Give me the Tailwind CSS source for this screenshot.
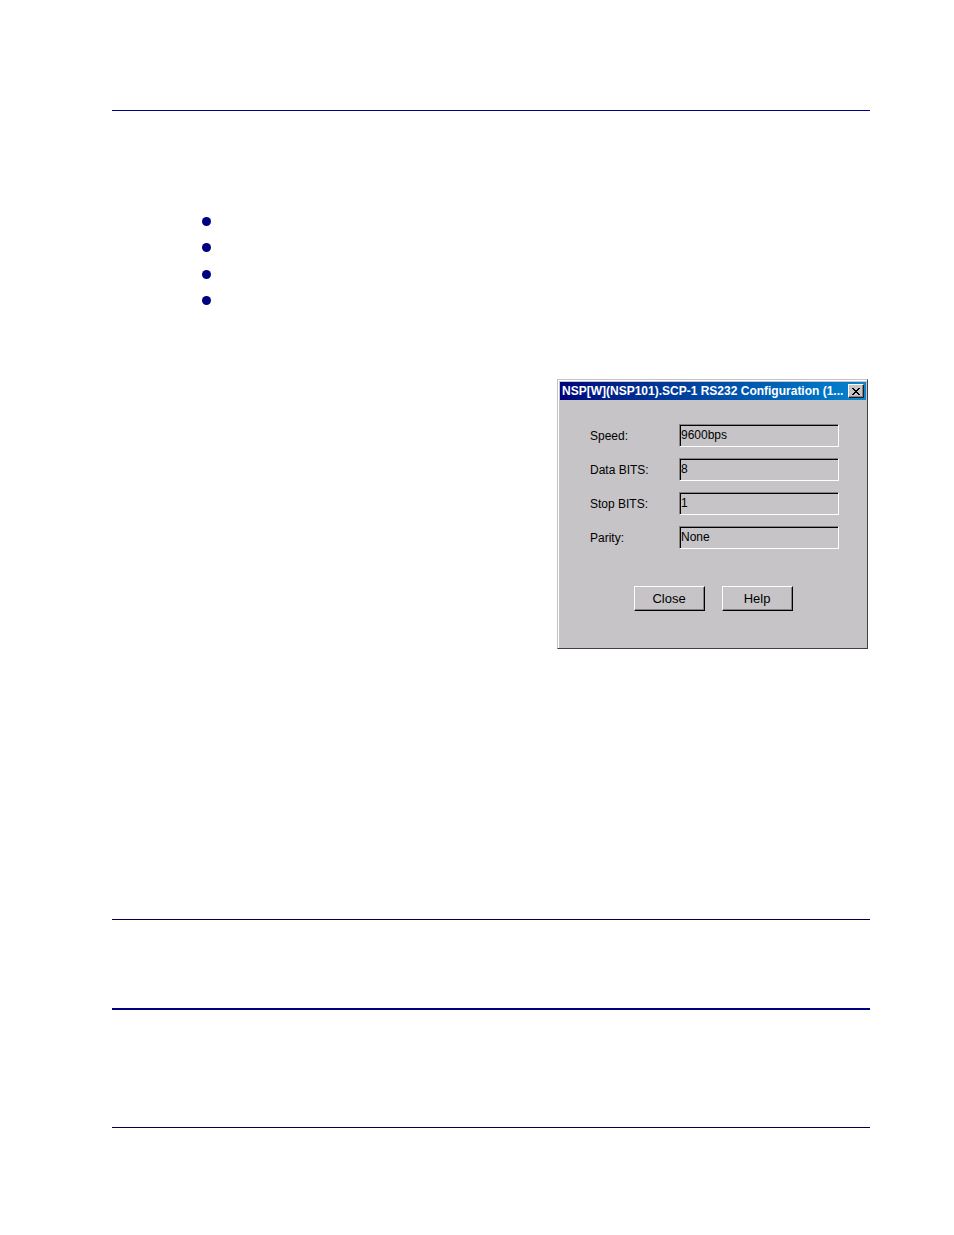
<!DOCTYPE html>
<html lang="en">

<head>
    <meta charset="UTF-8">
    <meta name="viewport" content="width=device-width, initial-scale=1.0">
    <title>RS232 Configuration</title>
    <script src="https://cdn.jsdelivr.net/npm/@tailwindcss/browser@4"></script>
</head>

<body class="bg-white text-black font-['Liberation_Sans',Arial,sans-serif]">
    <div class="pl-[112px] pr-[84px] pt-[110px] pb-[107px]">
        <header class="border-t border-[#000080]"></header>

        <main class="pt-[106px]">
            <ul class="ml-[90px] h-[88px] flex flex-col justify-between">
                <li class="size-[9px] rounded-full bg-[#000080]"></li>
                <li class="size-[9px] rounded-full bg-[#000080]"></li>
                <li class="size-[9px] rounded-full bg-[#000080]"></li>
                <li class="size-[9px] rounded-full bg-[#000080]"></li>
            </ul>

            <!-- RS232 dialog -->
            <section class="mt-[74px] mr-[2px] ml-auto w-[311px] border border-t-[#c6c3c6] border-l-[#c6c3c6] border-r-[#404040] border-b-[#404040]">
                <div class="border-t border-l border-white bg-[#c6c4c7] pt-px pl-px pr-px pb-[37px]">
                    <div class="h-[18px] flex items-center justify-between pl-[2px] pr-[2px] bg-linear-to-r from-[#00007c] to-[#1084d0]">
                        <h1 class="text-xs font-bold text-white whitespace-nowrap">NSP[W](NSP101).SCP-1 RS232 Configuration (1...</h1>
                        <button aria-label="Close window" class="w-[16px] h-[14px] shrink-0 flex items-center justify-center bg-[#c6c4c7] border border-t-white border-l-white border-r-[#202020] border-b-[#202020] shadow-[inset_-1px_-1px_0_#848284]">
                            <svg class="w-[8px] h-[7px]" viewBox="0 0 8 7" fill="#000" shape-rendering="crispEdges">
                                <path d="M0 0h2v1h1v1h2v-1h1v-1h2v1h-1v1h-1v1h-1v1h1v1h1v1h1v1h-2v-1h-1v-1h-2v1h-1v1h-2v-1h1v-1h1v-1h1v-1h-1v-1h-1v-1h-1z" />
                            </svg>
                        </button>
                    </div>

                    <form class="pt-[24px] px-[27px] text-xs">
                        <div class="pl-[3px] grid grid-cols-[89px_1fr] items-center gap-y-[11px]">
                            <label for="speed">Speed:</label>
                            <input id="speed" type="text" value="9600bps" readonly class="h-[23px] w-full pl-px pb-[2px] border border-t-[#848284] border-l-[#848284] border-r-white border-b-white shadow-[inset_1px_1px_0_#000]">
                            <label for="dataBits">Data BITS:</label>
                            <input id="dataBits" type="text" value="8" readonly class="h-[23px] w-full pl-px pb-[2px] border border-t-[#848284] border-l-[#848284] border-r-white border-b-white shadow-[inset_1px_1px_0_#000]">
                            <label for="stopBits">Stop BITS:</label>
                            <input id="stopBits" type="text" value="1" readonly class="h-[23px] w-full pl-px pb-[2px] border border-t-[#848284] border-l-[#848284] border-r-white border-b-white shadow-[inset_1px_1px_0_#000]">
                            <label for="parity">Parity:</label>
                            <input id="parity" type="text" value="None" readonly class="h-[23px] w-full pl-px pb-[2px] border border-t-[#848284] border-l-[#848284] border-r-white border-b-white shadow-[inset_1px_1px_0_#000]">
                        </div>

                        <div class="mt-[37px] flex justify-center gap-[17px] text-[13px]">
                            <button type="button" class="w-[71px] h-[25px] border border-t-white border-l-white border-r-black border-b-black shadow-[inset_-1px_-1px_0_#848284]">Close</button>
                            <button type="button" class="w-[71px] h-[25px] border border-t-white border-l-white border-r-black border-b-black shadow-[inset_-1px_-1px_0_#848284]">Help</button>
                        </div>
                    </form>
                </div>
            </section>
        </main>

        <footer>
            <hr class="mt-[270px] border-t border-[#00004d]">
            <hr class="mt-[88px] border-t-2 border-[#000080]">
            <hr class="mt-[117px] border-t border-[#00004d]">
        </footer>
    </div>
</body>

</html>
